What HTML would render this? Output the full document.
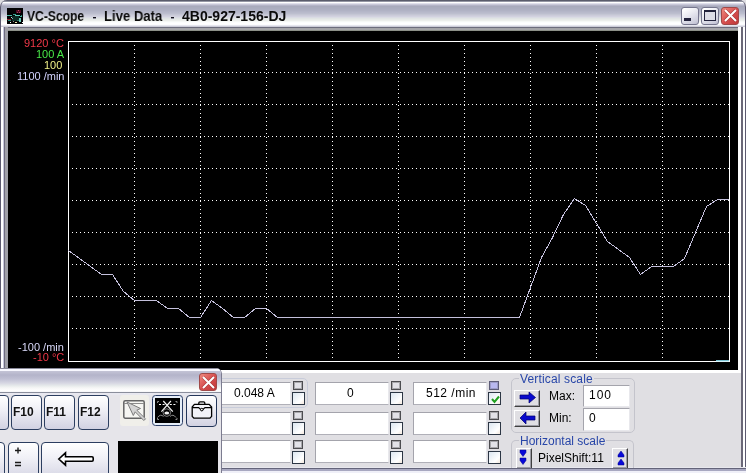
<!DOCTYPE html>
<html><head><meta charset="utf-8">
<style>
*{margin:0;padding:0;box-sizing:border-box}
html,body{width:746px;height:473px;overflow:hidden;background:#E0DFE3;font-family:"Liberation Sans",sans-serif;position:relative}
.a{position:absolute}
#title{left:0;top:0;width:746px;height:31px;background:linear-gradient(to bottom,#5A5C6C 0px,#5A5C6C 1px,#9496A4 1px,#9496A4 2px,#FFFFFF 2px,#FFFFFF 3px,#E0E0EC 3px,#E0E0EC 4px,#C8C8D8 4px,#C8C8D8 5px,#B4B4C8 5px,#B4B4C8 6px,#A8AABC 6px,#A8AABC 7px,#AAACBE 7px,#AAACBE 8px,#ABADC0 8px,#ABADC0 9px,#ADAFC2 9px,#ADAFC2 10px,#B0B2C4 10px,#B0B2C4 11px,#B4B6C8 11px,#B4B6C8 12px,#B8BACB 12px,#B8BACB 13px,#BCBECE 13px,#BCBECE 14px,#C4C6D4 14px,#C4C6D4 15px,#CCCCDA 15px,#CCCCDA 16px,#D2D2E0 16px,#D2D2E0 17px,#DADCE4 17px,#DADCE4 18px,#E0E4E4 18px,#E0E4E4 19px,#E6EAE8 19px,#E6EAE8 20px,#ECEEEC 20px,#ECEEEC 21px,#F6F8F6 21px,#F6F8F6 22px,#FCFDFE 22px,#FCFDFE 23px,#FFFFFF 23px,#FFFFFF 24px,#FCFCFE 24px,#FCFCFE 25px,#E6E6EE 25px,#E6E6EE 26px,#CCCCD8 26px,#CCCCD8 27px,#6C6C7C 27px,#6C6C7C 28px,#A4A4A8 28px,#A4A4A8 29px,#A6A6AA 29px,#A6A6AA 30px,#8C9088 30px,#8C9088 31px);border-radius:7px 7px 0 0;border-left:1px solid #5C5A70;border-right:1px solid #5C5A70}
#fl{left:0;top:27px;width:8px;height:446px;background:linear-gradient(to right,#5C5A70 0,#5C5A70 1px,#FFFFFF 1px,#FFFFFF 3px,#C8C8DC 3px,#C8C8DC 4px,#6E6C80 4px,#6E6C80 5px,#A0A0A8 5px,#A0A0A8 8px)}
#fr{left:741px;top:27px;width:5px;height:441px;background:linear-gradient(to right,#6A6878 0,#6A6878 2px,#FFFFFF 2px,#FFFFFF 4px,#5C5A70 4px)}
#frw{left:738px;top:27px;width:3px;height:346px;background:#FFFFFF}
.tt{will-change:transform;top:8px;font-weight:bold;font-size:14px;color:#0A0A0A;white-space:pre;line-height:17px;transform-origin:0 0}
.tbtn{top:7px;width:18px;height:18px;border-radius:3px;border:1px solid #76768E;background:linear-gradient(150deg,#FFFFFF 10%,#E8E8F0 45%,#CCCCDC 85%,#B8B8CC)}
#chart{left:8px;top:31px;width:730px;height:339px;background:#000}
.lbl{will-change:transform;font-size:11px;line-height:11px;text-align:right;white-space:pre}
#below{left:5px;top:370px;width:736px;height:3px;background:#FFFFFF}
#bot{left:0;top:467px;width:746px;height:6px;background:linear-gradient(to bottom,#E8E8EE 0,#E8E8EE 1px,#64647A 1px,#64647A 2px,#A8A8C0 2px,#A8A8C0 4px,#F0F0F8 4px)}
.tb{background:#FFFFFF;border:1px solid #A4A4AC;border-right-color:#E8E8EC;border-bottom-color:#B0B0B8}
.cks{width:10px;height:9px;border:1px solid #4C4C50;box-shadow:inset 0 0 0 1px #A8A8AC;background:#E2E2E8}
.ckb{width:13px;height:13px;border:1px solid #2C3644;background:linear-gradient(135deg,#DCE6F0,#FFFFFF 70%,#F4E8DC)}
.grp{border:1px solid #C4C4CC;border-radius:5px}
.gtitle{will-change:transform;color:#2846A8;font-size:12px;line-height:12px;white-space:pre;background:#E0DFE3;padding:0 1px}
.btn3{background:#E0DFE3;border-top:1px solid #FFFFFF;border-left:1px solid #FFFFFF;border-right:1px solid #404040;border-bottom:1px solid #404040;box-shadow:inset -1px -1px 0 #9C9CA4}
.ptxt{will-change:transform;font-size:12px;line-height:12px;color:#000;white-space:pre}
/* floating window */
#fw{left:-6px;top:368px;width:227px;height:110px;border:1px solid #5C5C70;border-radius:6px 6px 0 0;background:#E6E5EA;overflow:hidden}
#fwt{left:0;top:0;width:227px;height:25px;background:linear-gradient(to bottom,#F8F8FC 0,#D6D6E2 3px,#B6B6CA 8px,#C4C4D6 13px,#DCDCE8 18px,#F6F8F6 22px,#FFFFFF 24px,#C8C8D0 25px)}
.kt{will-change:transform;font-weight:bold;font-size:12px;line-height:12px;color:#111;white-space:pre;transform-origin:0 0;transform:scaleX(0.98)}
.kb{border:1px solid #2C3E60;border-radius:4px;background:linear-gradient(to bottom,#FFFFFF 0%,#F0F0F6 40%,#D2D2E2 100%);font-weight:bold;font-size:12px;line-height:12px;text-align:center;color:#1A1A1A}
</style></head><body>

<div id="title" class="a"></div>
<div id="fl" class="a"></div>
<div id="fr" class="a"></div>
<div id="frw" class="a"></div>

<!-- app icon -->
<svg class="a" style="left:7px;top:8px" width="16" height="16" viewBox="0 0 16 16" shape-rendering="crispEdges">
<rect width="16" height="16" fill="#020204"/>
<rect x="9" y="2" width="5" height="3" fill="#4A0A20"/><rect x="11" y="2" width="1" height="1" fill="#C04A6A"/><rect x="10" y="4" width="1" height="1" fill="#A83A5A"/><rect x="12" y="4" width="1" height="1" fill="#A83A5A"/>
<rect x="5" y="8" width="7" height="5" fill="#0C2A24"/>
<rect x="0" y="7" width="5" height="1" fill="#48B8A4"/>
<rect x="6" y="6" width="3" height="1" fill="#3A9C8C"/><rect x="8" y="7" width="5" height="1" fill="#5CD0BC"/><rect x="13" y="8" width="2" height="1" fill="#48B8A4"/><rect x="14" y="7" width="1" height="1" fill="#2A8070"/>
<rect x="4" y="9" width="1" height="1" fill="#C8D8D8"/><rect x="5" y="10" width="1" height="1" fill="#8AB0B0"/>
<rect x="0" y="11" width="4" height="1" fill="#8A1A2A"/><rect x="1" y="12" width="3" height="1" fill="#2A8C7C"/>
<rect x="12" y="10" width="2" height="4" fill="#6ACCBC"/><rect x="10" y="12" width="2" height="1" fill="#2A6C60"/>
<rect x="3" y="14" width="1" height="1" fill="#FFFFFF"/><rect x="8" y="14" width="2" height="1" fill="#E8E8B0"/><rect x="15" y="14" width="1" height="1" fill="#FFFFFF"/><rect x="6" y="13" width="1" height="1" fill="#8C8C8C"/>
</svg>

<div class="a tt" style="left:27px;transform:scaleX(0.865)">VC-Scope</div>
<div class="a" style="left:93px;top:17px;width:3px;height:1px;background:#101018;box-shadow:0 1px 0 #8C8C9C"></div>
<div class="a tt" style="left:104px;transform:scaleX(0.935)">Live Data</div>
<div class="a" style="left:171px;top:17px;width:3px;height:1px;background:#101018;box-shadow:0 1px 0 #8C8C9C"></div>
<div class="a tt" style="left:182px">4B0-927-156-DJ</div>

<!-- title buttons -->
<div class="a tbtn" style="left:681px"><div class="a" style="left:2px;top:10px;width:7px;height:3px;background:#22223C"></div></div>
<div class="a tbtn" style="left:701px"><div class="a" style="left:2px;top:2px;width:12px;height:11px;border:1px solid #22223C;border-top-width:2px;background:#DCDCE6"></div></div>
<div class="a tbtn" style="left:721px;border-color:#A04848;background:linear-gradient(135deg,#F08A80,#D85050 50%,#C03838)">
<svg class="a" style="left:1px;top:0px" width="14" height="14" viewBox="0 0 14 14"><path d="M2 2L13 13M13 2L2 13" stroke="#7A2020" stroke-width="3.2" opacity="0.45"/><path d="M2 2L13 13M13 2L2 13" stroke="#FFF" stroke-width="2"/></svg></div>

<!-- chart -->
<div id="chart" class="a"></div>
<svg class="a" style="left:0;top:0" width="746" height="473" viewBox="0 0 746 473">
<rect x="68.5" y="41.5" width="661" height="320" fill="none" stroke="#FFFFFF" stroke-width="1" shape-rendering="crispEdges"/>
<line x1="716" y1="360.5" x2="729" y2="360.5" stroke="#7CC4D4" stroke-width="1" shape-rendering="crispEdges"/><line x1="716" y1="361.5" x2="729" y2="361.5" stroke="#D8F4FA" stroke-width="1" shape-rendering="crispEdges"/>
<g stroke="#FFFFFF" stroke-width="1" stroke-dasharray="1 3" shape-rendering="crispEdges">
<line x1="134.5" y1="45" x2="134.5" y2="361" />
<line x1="200.5" y1="45" x2="200.5" y2="361" />
<line x1="266.5" y1="45" x2="266.5" y2="361" />
<line x1="332.5" y1="45" x2="332.5" y2="361" />
<line x1="398.5" y1="45" x2="398.5" y2="361" />
<line x1="464.5" y1="45" x2="464.5" y2="361" />
<line x1="530.5" y1="45" x2="530.5" y2="361" />
<line x1="596.5" y1="45" x2="596.5" y2="361" />
<line x1="662.5" y1="45" x2="662.5" y2="361" />
<line x1="72" y1="72.5" x2="729" y2="72.5" />
<line x1="72" y1="104.5" x2="729" y2="104.5" />
<line x1="72" y1="136.5" x2="729" y2="136.5" />
<line x1="72" y1="168.5" x2="729" y2="168.5" />
<line x1="72" y1="200.5" x2="729" y2="200.5" />
<line x1="72" y1="232.5" x2="729" y2="232.5" />
<line x1="72" y1="264.5" x2="729" y2="264.5" />
<line x1="72" y1="296.5" x2="729" y2="296.5" />
<line x1="72" y1="328.5" x2="729" y2="328.5" />
</g>
<polyline points="68.5,250.5 79.5,258.5 90.5,266.5 101.5,274.5 112.5,274.5 123.5,291.5 134.5,300.5 145.5,300.5 156.5,300.5 167.5,308.5 178.5,308.5 189.5,317.5 200.5,317.5 211.5,300.5 222.5,308.5 233.5,317.5 244.5,317.5 255.5,308.5 266.5,308.5 277.5,317.5 288.5,317.5 299.5,317.5 310.5,317.5 321.5,317.5 332.5,317.5 343.5,317.5 354.5,317.5 365.5,317.5 376.5,317.5 387.5,317.5 398.5,317.5 409.5,317.5 420.5,317.5 431.5,317.5 442.5,317.5 453.5,317.5 464.5,317.5 475.5,317.5 486.5,317.5 497.5,317.5 508.5,317.5 519.5,317.5 530.5,287.5 541.5,257.5 552.5,237.5 563.5,214.5 574.5,198.5 585.5,205.5 596.5,223.5 607.5,241.5 618.5,249.5 629.5,257.5 640.5,274.5 651.5,266.5 662.5,266.5 673.5,266.5 684.5,258.5 695.5,232.5 706.5,206.5 717.5,199.5 728.5,199.5" fill="none" stroke="#C4C0DC" stroke-width="1" shape-rendering="crispEdges"/>
</svg>
<div class="a lbl" style="right:682px;top:38px;color:#F03848">9120 °C</div>
<div class="a lbl" style="right:682px;top:49px;color:#48E848">100 A</div>
<div class="a lbl" style="right:684px;top:60px;color:#F0F088">100</div>
<div class="a lbl" style="right:682px;top:71px;color:#D4D4FF">1100 /min</div>
<div class="a lbl" style="right:682px;top:342px;color:#D8D8F8">-100 /min</div>
<div class="a lbl" style="right:682px;top:352px;color:#F03848">-10 °C</div>

<div id="below" class="a"></div>
<div id="bot" class="a"></div>

<!-- panel: channel highlight -->
<div class="a grp" style="left:200px;top:378px;width:108px;height:30px;border-color:#C8CCDA"></div>

<!-- text boxes -->
<div class="a tb" style="left:217px;top:382px;width:74px;height:23px"></div>
<div class="a tb" style="left:315px;top:382px;width:74px;height:23px"></div>
<div class="a tb" style="left:413px;top:382px;width:74px;height:23px"></div>
<div class="a tb" style="left:217px;top:412px;width:74px;height:23px"></div>
<div class="a tb" style="left:315px;top:412px;width:74px;height:23px"></div>
<div class="a tb" style="left:413px;top:412px;width:74px;height:23px"></div>
<div class="a tb" style="left:217px;top:440px;width:74px;height:23px"></div>
<div class="a tb" style="left:315px;top:440px;width:74px;height:23px"></div>
<div class="a tb" style="left:413px;top:440px;width:74px;height:23px"></div>

<div class="a ptxt" style="left:234px;top:387px">0.048 A</div>
<div class="a ptxt" style="left:347px;top:387px">0</div>
<div class="a ptxt" style="left:426px;top:387px;letter-spacing:0.5px">512 /min</div>

<!-- checkboxes -->
<div class="a cks" style="left:293px;top:381px"></div><div class="a ckb" style="left:292px;top:392px"></div>
<div class="a cks" style="left:391px;top:381px"></div><div class="a ckb" style="left:390px;top:392px"></div>
<div class="a cks" style="left:489px;top:381px;background:#B8B8F0;border-color:#5C5C78;box-shadow:inset 0 0 0 1px #9C9CC8"></div>
<div class="a ckb" style="left:488px;top:392px"><svg class="a" style="left:1px;top:1px" width="11" height="11" viewBox="0 0 11 11"><path d="M2 5l2.5 3L9 2.5" stroke="#21A121" stroke-width="2" fill="none"/></svg></div>
<div class="a cks" style="left:293px;top:411px"></div><div class="a ckb" style="left:292px;top:422px"></div>
<div class="a cks" style="left:391px;top:411px"></div><div class="a ckb" style="left:390px;top:422px"></div>
<div class="a cks" style="left:489px;top:411px"></div><div class="a ckb" style="left:488px;top:422px"></div>
<div class="a cks" style="left:293px;top:440px"></div><div class="a ckb" style="left:292px;top:451px"></div>
<div class="a cks" style="left:391px;top:440px"></div><div class="a ckb" style="left:390px;top:451px"></div>
<div class="a cks" style="left:489px;top:440px"></div><div class="a ckb" style="left:488px;top:451px"></div>

<!-- Vertical scale group -->
<div class="a grp" style="left:511px;top:378px;width:124px;height:55px"></div>
<div class="a gtitle" style="left:519px;top:373px;letter-spacing:0.15px">Vertical scale</div>
<div class="a btn3" style="left:514px;top:390px;width:26px;height:17px">
<svg class="a" style="left:-1px;top:-1px" width="26" height="17" viewBox="0 0 26 17"><path d="M6 5H15V2L21.5 7.5 15 13V9H6Z" fill="#0A0ACC" stroke="#00006C" stroke-width="0.7"/></svg></div>
<div class="a btn3" style="left:514px;top:410px;width:26px;height:17px">
<svg class="a" style="left:-1px;top:-1px" width="26" height="17" viewBox="0 0 26 17"><path d="M21 6H12V2L6 8 12 14V10H21Z" fill="#0A0ACC" stroke="#00006C" stroke-width="0.7"/></svg></div>
<div class="a ptxt" style="left:549px;top:390px">Max:</div>
<div class="a ptxt" style="left:549px;top:412px">Min:</div>
<div class="a tb" style="left:583px;top:385px;width:47px;height:22px;border-color:#A4A4AC #E8E8EC #E8E8EC #A4A4AC"></div>
<div class="a tb" style="left:583px;top:408px;width:47px;height:23px;border-color:#A4A4AC #E8E8EC #E8E8EC #A4A4AC"></div>
<div class="a ptxt" style="left:589px;top:389px;letter-spacing:1px">100</div>
<div class="a ptxt" style="left:589px;top:412px">0</div>

<!-- Horizontal scale group -->
<div class="a grp" style="left:511px;top:440px;width:123px;height:28px;border-bottom:none;border-radius:5px 5px 0 0"></div>
<div class="a gtitle" style="left:519px;top:435px">Horizontal scale</div>
<div class="a btn3" style="left:516px;top:448px;width:16px;height:20px;border-bottom:none">
<svg class="a" style="left:-1px;top:-1px" width="16" height="20" viewBox="0 0 16 20"><path d="M4 2h6v2.5L7 8.5 4 4.5zM4 10h6v2.5L7 16.5 4 12.5z" fill="#0808D8" stroke="#00008A" stroke-width="0.5"/></svg></div>
<div class="a ptxt" style="left:538px;top:452px">PixelShift:11</div>
<div class="a btn3" style="left:612px;top:448px;width:16px;height:20px;border-bottom:none">
<svg class="a" style="left:-1px;top:-1px" width="16" height="20" viewBox="0 0 16 20"><path d="M9 3L12 7v2H6V7zM9 11L12 15v2H6v-2z" fill="#0808D8" stroke="#00008A" stroke-width="0.5"/></svg></div>

<!-- floating window -->
<div class="a" style="left:0;top:368px;width:222px;height:105px;background:#E6E5EA;border-right:1px solid #7C7C90;border-radius:0 6px 0 0;overflow:hidden">
 <div class="a" style="left:0;top:0;width:221px;height:25px;background:linear-gradient(to bottom,#8A8A9A 0,#8A8A9A 1px,#F8F8FF 1px,#F8F8FF 3px,#C4C4D6 3px,#B4B4CA 7px,#C0C0D4 11px,#D6D6E2 15px,#E8ECEC 18px,#F6F6F6 20px,#FFFFFF 23px,#F0F0F4 24px,#8A8E9C 24px)"></div>
 <div class="a" style="left:0;top:25px;width:221px;height:2px;background:#E8E8F0"></div>
</div>
<div class="a tbtn" style="left:199px;top:373px;height:18px;border-color:#A04848;background:linear-gradient(135deg,#F08A80,#D85050 50%,#C03838)">
<svg class="a" style="left:1px;top:1px" width="14" height="14" viewBox="0 0 14 14"><path d="M2 2L13 13M13 2L2 13" stroke="#7A2020" stroke-width="3.2" opacity="0.45"/><path d="M2 2L13 13M13 2L2 13" stroke="#FFF" stroke-width="2"/></svg></div>
<div class="a kb" style="left:-20px;top:395px;width:29px;height:35px"></div>
<div class="a kb" style="left:11px;top:395px;width:31px;height:35px"></div>
<div class="a kb" style="left:44px;top:395px;width:31px;height:35px"></div>
<div class="a kb" style="left:78px;top:395px;width:31px;height:35px"></div>
<div class="a kt" style="left:13px;top:406px;">F10</div>
<div class="a kt" style="left:46px;top:406px;">F11</div>
<div class="a kt" style="left:80px;top:406px;">F12</div>
<div class="a" style="left:120px;top:395px;width:29px;height:31px;background:#F0EFEA;border-radius:3px">
 <svg class="a" style="left:0;top:0" width="29" height="31" viewBox="0 0 29 31"><rect x="3.8" y="5.8" width="20.4" height="17.4" rx="1.5" fill="#F6F6F2" stroke="#646464" stroke-width="1.5"/><path d="M4 8.5h20" stroke="#8C8C8C"/><path d="M7 7L20.5 13.5 16.8 15.2 25.5 23.8 23.8 25.5 15.2 16.8 13.3 20.5Z" fill="#D4D4D4" stroke="#7C7C7C" stroke-width="1" stroke-linejoin="round"/></svg>
</div>
<svg class="a" style="left:152px;top:395px" width="31" height="31" viewBox="0 0 31 31">
 <rect x="0.5" y="0.5" width="30" height="30" rx="3" fill="#E6EEF8" stroke="#2E4068"/>
 <rect x="3" y="3" width="25" height="25" fill="#000"/>
 <path d="M5.5 8V6.5H7M23.5 6.5H25V8M5.5 23V24.5H7M23.5 24.5H25V23" stroke="#8A8A8A" fill="none"/>
 <path d="M7 9.5H24" stroke="#FFFFFF" stroke-dasharray="2 1.6"/>
 <path d="M11.3 6L20.8 16.6M18.9 6L9.4 16.6" stroke="#F4F4F4" stroke-width="1.2"/>
 <circle cx="14.8" cy="17.6" r="3.8" stroke="#8C8C8C" fill="none" stroke-width="0.9"/>
 <ellipse cx="14.8" cy="18" rx="2.4" ry="1.5" fill="#F0F0F0"/>
 <path d="M5.5 22.5Q8.5 18.5 11.5 21.5M24 22.5Q21 18.5 18 21.5" stroke="#9A9A9A" fill="none" stroke-width="0.9"/>
</svg>
<div class="a kb" style="left:186px;top:395px;width:31px;height:32px;border-color:#24365A">
 <svg class="a" style="left:-1px;top:-1px" width="31" height="32" viewBox="0 0 31 32"><path d="M12.8 9.2V8q0-1.2 1.2-1.2h3.6q1.2 0 1.2 1.2v1.2" fill="none" stroke="#000" stroke-width="1.3"/><path d="M8.4 9.4H23.2L25.6 12V21.4L23.8 23.2H8L6.2 21.4V12Z" fill="#F2F2F8" stroke="#000" stroke-width="1.3" stroke-linejoin="round"/><path d="M6.2 12.6H12.6L15.8 15.4 19 12.6H25.6" fill="none" stroke="#000" stroke-width="1.2"/><circle cx="15.8" cy="14.6" r="1.3" fill="#FFF" stroke="#000" stroke-width="1"/></svg>
</div>
<div class="a kb" style="left:-27px;top:442px;width:32px;height:40px"></div>
<div class="a kb" style="left:8px;top:442px;width:31px;height:40px"></div>
<div class="a" style="left:14px;top:447px;width:8px;height:22px"><svg width="8" height="22" viewBox="0 0 8 22"><path d="M1 3.5h6M4 0.5v6M1 15.5h6M1 18.5h6" stroke="#1A1A1A" stroke-width="1.4"/></svg></div>
<div class="a kb" style="left:41px;top:442px;width:68px;height:40px">
 <svg class="a" style="left:15px;top:8px" width="38" height="16" viewBox="0 0 38 16"><path d="M1.8 8L8.5 1.8V5.8H35Q36.2 5.8 36.2 7V9Q36.2 10.2 35 10.2H8.5V14.2z" fill="#FFF" stroke="#000" stroke-width="1.6" stroke-linejoin="miter"/></svg>
</div>
<div class="a" style="left:118px;top:441px;width:100px;height:40px;background:#000"></div>

</body></html>
